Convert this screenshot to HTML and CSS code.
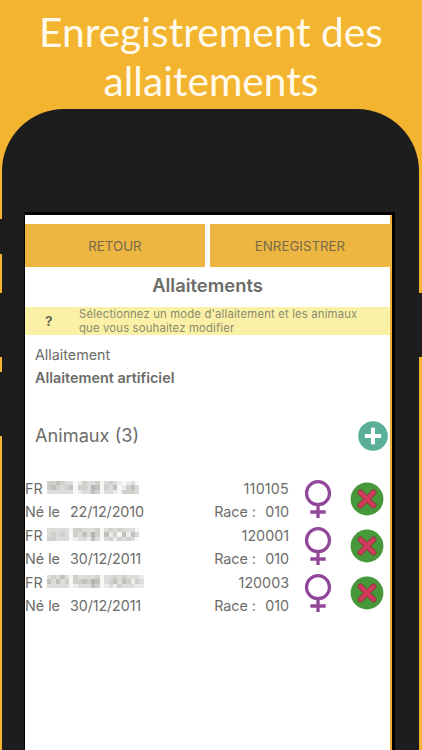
FILE: index.html
```html
<!DOCTYPE html>
<html lang="fr">
<head>
<meta charset="utf-8">
<title>Enregistrement des allaitements</title>
<link rel="stylesheet" href="styles.css">
</head>
<body>
<svg class="defs" width="0" height="0">
  <symbol id="female" viewBox="0 0 28 40">
    <g fill="none" stroke="#91479a">
      <circle cx="14" cy="14.2" r="11.5" stroke-width="3.2"/>
      <path d="M14 25.7V39M6.3 33H21.7" stroke-width="3.3"/>
    </g>
  </symbol>
  <symbol id="remove" viewBox="0 0 34 34">
    <circle cx="17" cy="17" r="16.4" fill="#46983a"/>
    <path d="M10.5 10.5L23.5 23.5M23.5 10.5L10.5 23.5" stroke="#893c3b" stroke-width="6" stroke-linecap="round"/>
    <path d="M10.5 10.5L23.5 23.5M23.5 10.5L10.5 23.5" stroke="#d03b5c" stroke-width="4.2" stroke-linecap="round"/>
  </symbol>
</svg>
<h1 class="headline">Enregistrement des<br>allaitements</h1>
<div class="phone">
  <span class="key key-mute"></span>
  <span class="key key-up"></span>
  <span class="key key-down"></span>
  <span class="key key-power"></span>
  <main class="screen">
    <nav class="actions">
      <button class="btn">RETOUR</button>
      <button class="btn btn-save">ENREGISTRER</button>
    </nav>
    <h2 class="title">Allaitements</h2>
    <div class="hint"><b class="hint-mark">?</b><p class="hint-text">Sélectionnez un mode d'allaitement et les animaux<br>que vous souhaitez modifier</p></div>
    <div class="mode"><div class="mode-label">Allaitement</div><div class="mode-value">Allaitement artificiel</div></div>
    <div class="list-head"><span class="count">Animaux (3)</span>
      <svg class="add" viewBox="0 0 30 30"><circle cx="15" cy="15" r="14.8" fill="#59af98"/><path d="M15 6.8V23.2M6.8 15H23.2" stroke="#fff" stroke-width="4"/></svg>
    </div>
    <section class="animals">
      <article class="animal">
        <div class="info">
          <div class="line"><span class="country">FR</span><svg class="mask" data-cells="334322013223023210120 343234033254032401342 222222012243022103332"></svg><span class="num num-wide">110105</span></div>
          <div class="line line-birth"><span class="born">Né le</span><span class="date">22/12/2010</span><span class="race">Race :</span><span class="code">010</span></div>
        </div>
        <svg class="female"><use href="#female"/></svg><svg class="remove"><use href="#remove"/></svg>
      </article>
      <article class="animal">
        <div class="info">
          <div class="line"><span class="country">FR</span><svg class="mask" data-cells="222220332223023232220 232320324253041304142 332220122142023132320"></svg><span class="num">120001</span></div>
          <div class="line line-birth"><span class="born">Né le</span><span class="date">30/12/2011</span><span class="race">Race :</span><span class="code">010</span></div>
        </div>
        <svg class="female"><use href="#female"/></svg><svg class="remove"><use href="#remove"/></svg>
      </article>
      <article class="animal">
        <div class="info">
          <div class="line"><span class="country">FR</span><svg class="mask mask-long" data-cells="2324203222230223232221 4242303343540234243132 2222201222430121322211"></svg><span class="num">120003</span></div>
          <div class="line line-birth"><span class="born">Né le</span><span class="date">30/12/2011</span><span class="race">Race :</span><span class="code">010</span></div>
        </div>
        <svg class="female"><use href="#female"/></svg><svg class="remove"><use href="#remove"/></svg>
      </article>
    </section>
  </main>
</div>
<script src="script.js"></script>
</body>
</html>
```
FILE: styles.css
```css
* { box-sizing: border-box; }
body { margin: 0; height: 750px; overflow: hidden; background: #f3b52f; font-family: Inter, "Liberation Sans", sans-serif; color: #6c6c69; }
.defs { display: block; height: 0; }
.headline { margin: 0; height: 109px; padding-top: 7px; text-align: center; color: #fffaec; font: 400 40.7px/49px Lato, sans-serif; white-space: nowrap; }
.phone { position: relative; height: 641px; margin: 0 3px 0 2px; padding: 103px 24px 0 22px; background: #1d1d1d; border-radius: 62px 62px 0 0; }
.key { position: absolute; width: 4px; background: #1d1d1d; }
.key-mute { left: -2px; top: 110px; height: 35px; }
.key-up { left: -2px; top: 184px; height: 64px; }
.key-down { left: -2px; top: 263px; height: 64px; }
.key-power { right: -3px; top: 184px; height: 64px; }
.screen { height: 538px; background: #fff; border: solid #000; border-width: 3px 3px 0 1px; box-shadow: inset -2px 0 #f0ae35; padding-top: 9px; }
.actions { display: flex; gap: 5px; height: 43px; }
.btn { border: 0; padding: 2px 0 0; width: 180px; height: 43px; background: #edb641; color: #756a4c; font: 400 13.3px/41px Inter, sans-serif; }
.btn-save { width: 182px; padding-right: 2px; }
.title { margin: 0; width: 365px; height: 40px; text-align: center; font-size: 18.4px; line-height: 37px; font-weight: 600; }
.hint { display: flex; width: 365px; height: 28px; background: #faf1a7; color: #8b8a6d; font-size: 11.3px; }
.hint-mark { width: 54px; padding-left: 20px; font-size: 13.5px; line-height: 28px; color: #6a6954; }
.hint-text { margin: 0; padding-top: 1px; line-height: 13.5px; letter-spacing: .17px; white-space: nowrap; }
.mode { padding: 8px 0 0 10px; height: 86px; font-size: 14.3px; line-height: 23px; }
.mode-value { font-weight: 600; font-size: 14.4px; }
.list-head { display: flex; justify-content: space-between; align-items: center; height: 30px; width: 363px; padding-left: 10px; font-size: 18.2px; }
.count { padding-bottom: 2px; }
.add { width: 30px; height: 30px; }
.animals { padding-top: 26px; }
.animal { display: flex; height: 47px; }
.info { width: 264px; }
.line { display: flex; align-items: center; height: 23.4px; font-size: 14.3px; white-space: nowrap; }
.line-birth { padding-bottom: 2px; }
.country { width: 22px; }
.mask { width: 92.4px; height: 13.2px; margin-top: -3px; }
.mask-long { width: 96.8px; }
.num { margin-left: auto; }
.num-wide { letter-spacing: .2px; }
.born { width: 45px; }
.date { letter-spacing: -.1px; }
.race { margin-left: auto; width: 51px; }
.female { width: 28px; height: 40px; margin: 2px 0 0 15px; }
.remove { width: 34px; height: 34px; margin: 5px 0 0 18px; }
```
FILE: script.js
```js
// Draws the pixelated masks over the animal identifiers.
const shades = ["#f7f7f6", "#ebebea", "#dcdcda", "#cfcfcc", "#c0c0bd", "#b3b3b0"];
document.querySelectorAll(".mask").forEach(svg => {
  const rows = svg.dataset.cells.split(" ");
  svg.setAttribute("viewBox", `0 0 ${rows[0].length} 3`);
  svg.setAttribute("shape-rendering", "crispEdges");
  rows.forEach((row, y) => {
    [...row].forEach((level, x) => {
      const r = document.createElementNS("http://www.w3.org/2000/svg", "rect");
      r.setAttribute("x", x);
      r.setAttribute("y", y);
      r.setAttribute("width", 1);
      r.setAttribute("height", 1);
      r.setAttribute("fill", shades[level]);
      svg.append(r);
    });
  });
});
```
